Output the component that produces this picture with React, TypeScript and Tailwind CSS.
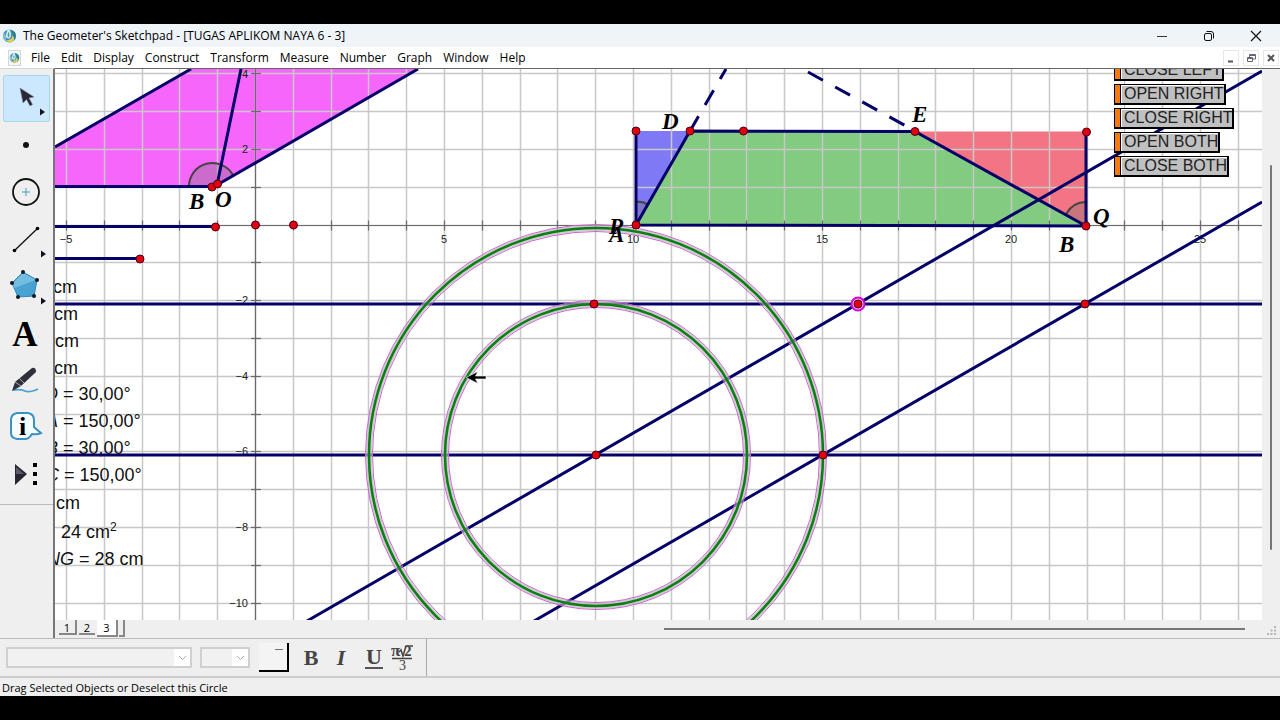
const NAVY = "#050068";

const MENUS = ["File", "Edit", "Display", "Construct", "Transform", "Measure", "Number", "Graph", "Window", "Help"];

const UNIT = 37.8;
const OX = 255.5;
const OY = 225;
const range = (a: number, b: number) => Array.from({ length: b - a + 1 }, (_, i) => a + i);
const gx = (n: number) => Math.floor(OX + n * UNIT) + 0.5;
const gy = (n: number) => Math.floor(OY - n * UNIT) + 0.5;

const POINTS: [number, number][] = [
  [212, 187], [217.5, 184], [215.5, 227], [140, 259], [255.5, 225], [293.5, 225],
  [636, 131], [690, 131], [743.5, 131], [915, 131.5], [1086.5, 132], [636, 225],
  [1086, 226], [594, 304], [858, 304], [1085, 304], [596, 455], [823, 455],
];

const LABELS: [string, number, number][] = [
  ["B", 189, 209], ["O", 215, 207], ["D", 662, 129], ["E", 912, 122], ["P", 609, 234],
  ["A", 609, 242], ["B", 1059, 252], ["Q", 1093, 224],
];

function Ring({ r }: { r: number }) {
  return (
    <g fill="none">
      <circle cx="596" cy="455" r={r} stroke="#b4bab4" strokeOpacity=".7" strokeWidth="6" />
      <circle cx="596" cy="455" r={r + 3.5} stroke="#cf62d6" strokeWidth="1" />
      <circle cx="596" cy="455" r={r - 3.5} stroke="#cf62d6" strokeWidth="1" />
      <circle cx="596" cy="455" r={r} stroke="#0d7d16" strokeWidth="2.5" />
    </g>
  );
}

function Sketch() {
  return (
    <svg className="absolute inset-0 h-full w-full" role="img" aria-label="Coordinate plane with geometric constructions">
      <g transform="translate(-55 -69)">
        <path d="M55 147 L191 69 H418 L217 185 L212 187 H55Z" fill="#f766fb" />
        <path d="M636 131H690L636 225Z" fill="#8079f6" />
        <path d="M690 131H915L1086 226H636Z" fill="#82cb80" />
        <path d="M915 131.500H1086V226Z" fill="#f37482" />
        <g stroke="#c8c8c8" strokeWidth="1.500">
          {range(-5, 26).map((n) => <line key={n} x1={gx(n)} x2={gx(n)} y1="69" y2="2000" />)}
          {range(-10, 4).map((n) => <line key={n} x1="55" x2="4000" y1={gy(n)} y2={gy(n)} />)}
        </g>
        <g stroke="#6b6b6b" strokeWidth="1.200">
          <line x1={gx(0)} x2={gx(0)} y1="69" y2="2000" />
          <line x1="55" x2="4000" y1={gy(0)} y2={gy(0)} />
          {range(-5, 26).map((n) => <line key={n} x1={gx(n)} x2={gx(n)} y1="220.500" y2="230.500" />)}
          {range(-10, 4).map((n) => <line key={n} x1="251" x2="261" y1={gy(n)} y2={gy(n)} />)}
        </g>
        <g fontFamily="'Liberation Sans', sans-serif" fontSize="11" fill="#222">
          <g textAnchor="middle">
            <text x="66" y="243">−5</text>
            <text x="444" y="243">5</text>
            <text x="633" y="243">10</text>
            <text x="822" y="243">15</text>
            <text x="1011" y="243">20</text>
            <text x="1200" y="243">25</text>
          </g>
          <g textAnchor="end">
            <text x="248" y="78">4</text>
            <text x="248" y="153">2</text>
            <text x="248" y="304">−2</text>
            <text x="248" y="380">−4</text>
            <text x="248" y="455">−6</text>
            <text x="248" y="531">−8</text>
            <text x="248" y="607">−10</text>
          </g>
        </g>
        <g fontFamily="'Liberation Sans', sans-serif" fontSize="18" fill="#111">
          <text x="53" y="293">cm</text>
          <text x="54" y="320">cm</text>
          <text x="55" y="347">cm</text>
          <text x="54" y="374">cm</text>
          <text x="45" y="400"><tspan fontStyle="italic">D</tspan> = 30,00°</text>
          <text x="46" y="427"><tspan fontStyle="italic">A</tspan> = 150,00°</text>
          <text x="46" y="454"><tspan fontStyle="italic">B</tspan> = 30,00°</text>
          <text x="46" y="481"><tspan fontStyle="italic">C</tspan> = 150,00°</text>
          <text x="56" y="509">cm</text>
          <text x="61" y="538">24 cm<tspan dy="-7" fontSize="12">2</tspan></text>
          <text x="47" y="565"><tspan fontStyle="italic">NG</tspan> = 28 cm</text>
        </g>
        <g fill="#777" fillOpacity=".35" stroke="#444" strokeWidth="2">
          <path d="M189 187A23.500 23.500 0 0 1 233 175L215 186Z" stroke="none" />
          <path d="M189 187A23.500 23.500 0 0 1 233 175" fill="none" />
          <path d="M636 202Q643 201 648 205L636 225Z" stroke="none" />
          <path d="M636 202Q643 201 648 205" fill="none" />
          <path d="M1086 202Q1073 202 1066 214L1086 226Z" stroke="none" />
          <path d="M1086 202Q1073 202 1066 214" fill="none" />
        </g>
        <g stroke={NAVY} strokeWidth="3" fill="none">
          <path d="M55 147L191 69M418 69L217 185M241 69L217 185M55 186.500H212" />
          <path d="M55 226.500H215M55 258.500H140" />
          <path d="M636 131V225M690 131L636 225L1086 226V132M690 131L915 131.500L1086 226" />
          <path d="M55 304H4000M55 455H4000" />
          <path d="M307 621L1262 71M534 621L1262 202" />
          <path d="M690 131L726 69" strokeDasharray="17 13" />
          <path d="M808 72L915 131" strokeDasharray="17 14" />
        </g>
        <Ring r={151} />
        <Ring r={227} />
        <g fontFamily="'Liberation Serif', serif" fontSize="23" fontWeight="bold" fontStyle="italic">
          {LABELS.map(([t, x, y], i) => <text key={i} x={x} y={y}>{t}</text>)}
        </g>
        <circle cx="858" cy="304" r="6.500" fill="#f8a8f0" stroke="#d900d9" strokeWidth="2" />
        <g fill="#e00010" stroke="#4d0010" strokeWidth="1">
          {POINTS.map(([x, y], i) => <circle key={i} cx={x} cy={y} r="4" />)}
        </g>
        <path d="M466 377.500L478 371.500L475.500 376H486V379H475.500L478 383.500Z" fill="#000" stroke="#fff" strokeWidth=".6" />
      </g>
    </svg>
  );
}

function ActionButton({ children }: { children: string }) {
  return (
    <button className="flex h-[21px] border border-r-2 border-b-2 border-black bg-[#c0c0c0] font-['Liberation_Sans',sans-serif] text-base leading-[18px] text-[#222]">
      <span className="h-full w-[6px] border-r border-black bg-[#f47c0c]" />
      <span className="pl-[3px] shadow-[inset_1px_1px_#fff]">{children}</span>
    </button>
  );
}

function Logo({ className }: { className: string }) {
  return (
    <svg viewBox="0 0 16 16" className={className} aria-hidden="true">
      <circle cx="8" cy="8.500" r="7" fill="#3c93b5" />
      <path d="M2 5Q5 8 4 14Q0 11 2 5" fill="#8cc3cf" />
      <path d="M9 2Q13 4 14 5Q16 10 12 13Q13 7 9 2" fill="#2c7f86" />
      <path d="M4 13Q11 13 11 8Q14 10 12 14Q8 17 4 13" fill="#e4cd5c" />
      <path d="M7 0Q4 5 4 9Q6 13 9 10Q11 6 7 0" fill="#d3ecf3" />
      <path d="M7 4Q5 8 7 10Q9 8 7 4" fill="#4f9d8a" />
    </svg>
  );
}

function Flyout() {
  return <svg viewBox="0 0 5 7" className="absolute right-1 bottom-[5px] h-[8px] w-[5px]"><path d="M0 0L5 3.500L0 7Z" fill="#111120" /></svg>;
}

const TOOLS = [
  { name: "Selection Arrow", flyout: true, art: <path d="M16 12L19 27L22.500 23.500L26 30L28.500 28.500L25 22L30 21Z" fill="#292735" stroke="#8c8798" strokeWidth=".6" /> },
  { name: "Point", art: <circle cx="23" cy="22" r="3" fill="#11131c" /> },
  { name: "Compass", art: <><circle cx="23" cy="22" r="13" fill="none" stroke="#111" strokeWidth="1.800" /><path d="M19 22H27M23 18V26" stroke="#429bc5" /></> },
  { name: "Straightedge", flyout: true, art: <><path d="M11 34L35 11" stroke="#111" strokeWidth="1.300" /><circle cx="11.500" cy="33.500" r="1.800" /><circle cx="34.500" cy="11.500" r="1.800" /></> },
  { name: "Polygon", flyout: true, art: <><path d="M20 8L34 16L31 32L15 33L9 19Z" fill="#48a3d2" stroke="#2888b8" /><path d="M20 9L33 16L11 24L10 19Z" fill="#74bde0" /><g fill="#101827"><circle cx="20" cy="8" r="2" /><circle cx="34" cy="16" r="2" /><circle cx="31" cy="32" r="2" /><circle cx="15" cy="33" r="2" /><circle cx="9" cy="19" r="2" /></g></> },
  { name: "Text", art: <text x="22" y="35" textAnchor="middle" fontFamily="'Liberation Serif', serif" fontSize="35" fontWeight="bold">A</text> },
  { name: "Marker", art: <><path d="M10 32Q18 31 22 33T35 31" fill="none" stroke="#48a0cd" strokeWidth="1.800" /><path d="M9 33L12 24L29 10Q33 9 33 14L18 28Z" fill="#30303d" /><path d="M12 24L18 28M16 20L21 25" stroke="#aaa" /></> },
  { name: "Information", art: <><path d="M14 8H25Q31 9 31 15V22Q34 25 38 28Q34 30 29 29Q26 34 22 34H14Q8 33 8 28V15Q8 9 14 8Z" fill="#f7fcff" stroke="#3b91c3" strokeWidth="2" /><text x="19.500" y="30" textAnchor="middle" fontFamily="'Liberation Serif', serif" fontSize="26" fontWeight="bold">i</text></> },
  { name: "Custom Tool", art: <><path d="M12 12L24 22L12 33Z" fill="#262633" /><path d="M13 15L21 22H13Z" fill="#5c5a68" /><path d="M30 11h4v4h-4zM30 20h4v4h-4zM30 29h4v4h-4z" /></> },
];

function WindowButton({ label, children }: { label: string; children: React.ReactNode }) {
  return <button aria-label={label} className="flex h-full w-[47px] items-center justify-center">{children}</button>;
}

export default function App() {
  return (
    <div className="flex min-h-screen flex-col bg-black py-6 font-['Open_Sans','Noto_Sans',sans-serif] text-xs text-black">
      <header className="flex h-[23px] items-center bg-[#eff4f9] pl-[2px]">
        <Logo className="h-[15px] w-[15px]" />
        <h1 className="ml-[6px] flex-1 whitespace-nowrap">The Geometer's Sketchpad - [TUGAS APLIKOM NAYA 6 - 3]</h1>
        <div className="flex h-full pr-px">
          <WindowButton label="Minimize"><svg width="12" height="12"><path d="M1 6.500H11" stroke="#333" /></svg></WindowButton>
          <WindowButton label="Restore"><svg width="12" height="12" fill="none" stroke="#111"><rect x="1.500" y="3.500" width="7" height="7" rx="1.500" /><path d="M3.500 1.500H8Q10.500 1.500 10.500 4V8.500" /></svg></WindowButton>
          <WindowButton label="Close"><svg width="12" height="12"><path d="M1 1L11 11M11 1L1 11" stroke="#111" strokeWidth="1.200" /></svg></WindowButton>
        </div>
      </header>

      <nav className="flex h-[21px] items-center bg-white pl-2">
        <span className="flex h-4 w-[13px] items-center justify-center border border-gray-300 bg-[#f7f7f2]"><Logo className="h-[11px] w-[11px]" /></span>
        <div className="ml-[10px] flex flex-1 gap-[11px]">
          {MENUS.map((m) => <button key={m}>{m}</button>)}
        </div>
        <div className="flex h-full items-center gap-1 pr-px">
          <button aria-label="Minimize document" className="h-4 w-4 border border-gray-200"><svg viewBox="0 0 14 14"><path d="M4 10.500H9" stroke="#555" strokeWidth="2" /></svg></button>
          <button aria-label="Restore document" className="h-4 w-4 border border-gray-200"><svg viewBox="0 0 14 14" fill="none" stroke="#667"><path d="M3.500 6.500h5v4h-5zM5.500 6V3.500h6V8H9M5.500 4.500h6M3.500 7.500h5" /></svg></button>
          <button aria-label="Close document" className="h-4 w-4 border border-gray-200"><svg viewBox="0 0 14 14"><path d="M4 4L10 10M10 4L4 10" stroke="#555" strokeWidth="2" /></svg></button>
        </div>
      </nav>

      <div className="flex flex-1 bg-[#efefef]">
        <aside className="flex w-[55px] shrink-0 flex-col border-t border-r-2 border-t-gray-300 border-r-[#777]">
          <div className="flex flex-col border-b border-[#bbb] px-[3px] pt-[6px] pb-[6px]">
            {TOOLS.map((t, i) => (
              <button key={t.name} aria-label={t.name} className={i === 0 ? "relative h-[47px] rounded-xs border border-[#a5d7f3] bg-[#cce8ff]" : "relative h-[47px]"}>
                <svg width="46" height="46" className="block">{t.art}</svg>
                {t.flyout && <Flyout />}
              </button>
            ))}
          </div>
        </aside>

        <div className="flex min-w-0 flex-1 flex-col border-t border-[#666]">
          <div className="flex flex-1">
            <main className="relative min-h-[551px] flex-1 overflow-hidden bg-white">
              <Sketch />
              <div className="absolute -top-[9px] left-[1059px] flex flex-col items-start gap-[3px]">
                <ActionButton>CLOSE LEFT</ActionButton>
                <ActionButton>OPEN RIGHT</ActionButton>
                <ActionButton>CLOSE RIGHT</ActionButton>
                <ActionButton>OPEN BOTH</ActionButton>
                <ActionButton>CLOSE BOTH</ActionButton>
              </div>
            </main>
            <div className="flex w-[18px] justify-center pt-24 pb-[70px]"><div className="w-[2px] rounded bg-[#777]" /></div>
          </div>
          <div className="flex h-[18px] items-start pl-1 text-[11px] leading-[15px]">
            <button className="h-[15px] w-[18px] border-r-2 border-b-2 border-[#888]">1</button>
            <button className="ml-[2px] h-[15px] w-4 border-b-2 border-[#888]">2</button>
            <button className="ml-[2px] h-[17px] w-[21px] border-r-2 border-b-2 border-[#888] bg-white">3</button>
            <div className="ml-px h-[17px] w-[6px] border-r-2 border-b-2 border-[#888]" />
            <div className="flex h-full flex-1 items-center pl-[539px]"><div className="h-[2px] w-full max-w-[581px] bg-[#777]" /></div>
            <svg className="mt-[6px] mr-[3px] h-[10px] w-[10px]" fill="#b5b5b5"><path d="M7 0h2v2H7zM7 3.500h2v2H7zM7 7h2v2H7zM3.500 3.500h2v2h-2zM3.500 7h2v2h-2zM0 7h2v2H0z" /></svg>
          </div>
        </div>
      </div>

      <div className="flex h-10 border-t border-b-2 border-t-[#bbb] border-b-[#ccc] bg-[#efefef]">
        <div className="flex w-[427px] items-center border-r border-[#aaa] pl-[6px] font-['Liberation_Serif',serif] text-[#444]">
          <FormatSelect label="Font" wide />
          <FormatSelect label="Size" />
          <button aria-label="Text color" className="ml-[9px] flex h-[29px] w-[30px] justify-end border-r-2 border-b-2 border-black bg-[#f4f4f4] pt-[6px] pr-[4px]"><span className="h-px w-2 bg-gray-500" /></button>
          <button className="ml-[14px] w-4 text-[22px] font-bold">B</button>
          <button className="ml-4 w-3 text-[22px] font-bold italic">I</button>
          <button className="ml-[18px] w-[18px] border-b-2 border-[#555] text-[22px] leading-[20px] font-bold">U</button>
          <button aria-label="Show symbolic notation" className="ml-2">
            <svg width="24" height="28" fill="#444" stroke="#444">
              <text x="0" y="12" fontSize="17" fontWeight="bold" stroke="none">π</text>
              <path d="M8 8L10 6L12 12L15 2H22M1 14.500H21" fill="none" strokeWidth="1.500" />
              <text x="13" y="12" fontSize="15" fontWeight="bold" stroke="none">2</text>
              <text x="8" y="26" fontSize="14" stroke="none">3</text>
            </svg>
          </button>
        </div>
      </div>
      <footer className="h-[18px] bg-[#efefef] pl-[2px] text-[11px] leading-[20px]">Drag Selected Objects or Deselect this Circle</footer>
    </div>
  );
}

function FormatSelect({ label, wide }: { label: string; wide?: boolean }) {
  return (
    <div className={wide ? "relative w-[186px]" : "relative ml-2 w-[50px]"}>
      <select aria-label={label} disabled className="block h-[21px] w-full appearance-none border-2 border-[#d0d0d0] bg-[#f1f1f1]" />
      <span className="pointer-events-none absolute top-[2px] right-[2px] flex h-[17px] w-4 items-center justify-center bg-white">
        <svg width="9" height="6"><path d="M1 1L4.500 4.500L8 1" fill="none" stroke="#aaa" /></svg>
      </span>
    </div>
  );
}
